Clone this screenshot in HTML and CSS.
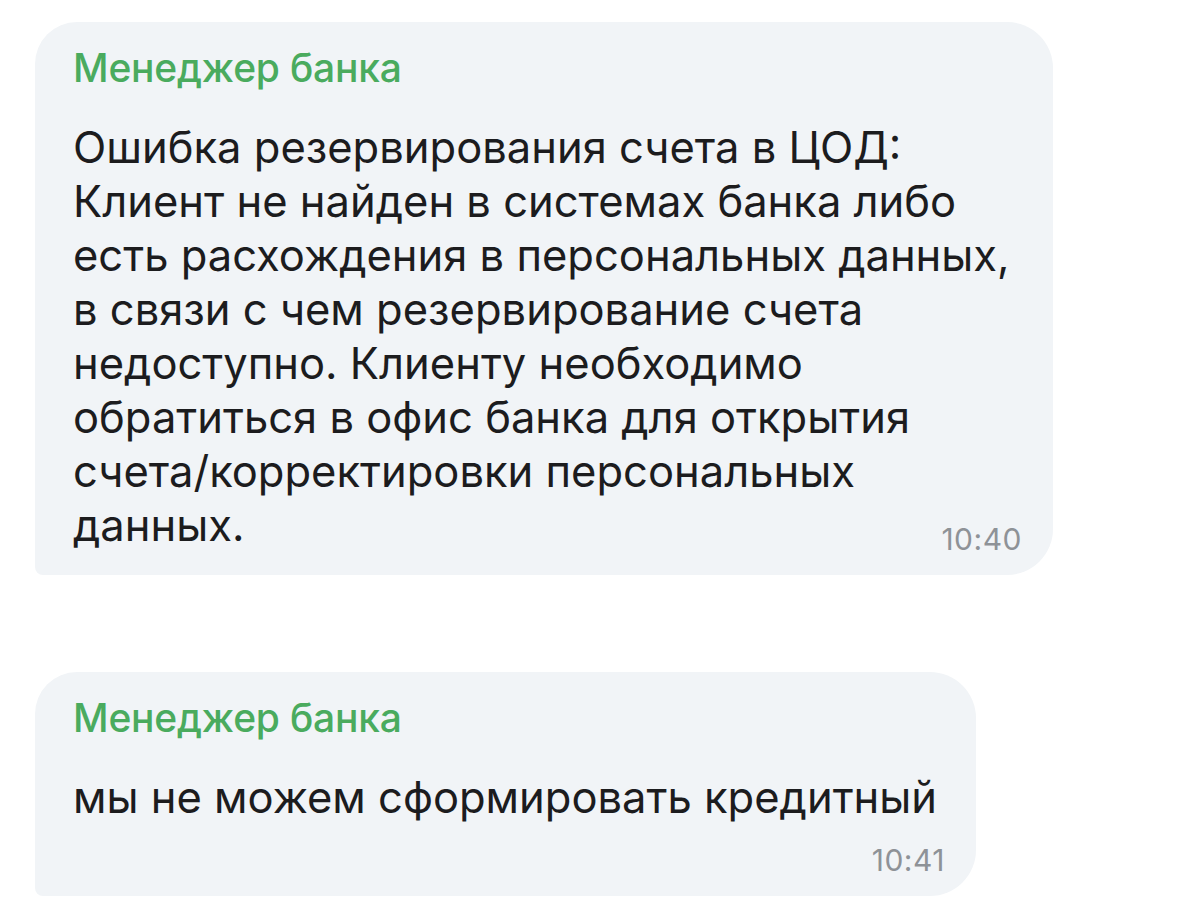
FILE: index.html
```html
<!DOCTYPE html>
<html lang="ru">
<head>
<meta charset="utf-8">
<link rel="stylesheet" href="styles.css">
</head>
<body>
<div class="chat">
  <div class="bubble bubble-wide">
    <div class="author">Менеджер банка</div>
    <div class="text">Ошибка резервирования счета в ЦОД:<br>Клиент не найден в системах банка либо<br>есть расхождения в персональных данных,<br>в связи с чем резервирование счета<br>недоступно. Клиенту необходимо<br>обратиться в офис банка для открытия<br>счета/корректировки персональных<br>данных.</div>
    <div class="time time-inline">10:40</div>
  </div>
  <div class="bubble bubble-narrow">
    <div class="author">Менеджер банка</div>
    <div class="text">мы не можем сформировать кредитный</div>
    <div class="time">10:41</div>
  </div>
</div>
</body>
</html>
```
FILE: styles.css
```css
html, body {
  margin: 0;
  padding: 0;
  background: #ffffff;
}
body {
  font-family: Inter, "Noto Sans", "DejaVu Sans", sans-serif;
  color: #1c1c1e;
}
.chat {
  padding: 22px 0 0 35px;
  display: flex;
  flex-direction: column;
  align-items: flex-start;
  gap: 97px;
}
.bubble {
  background: #f1f4f7;
  border-radius: 42px 46px 46px 8px;
  padding: 23px 31px 21px 38px;
  box-sizing: border-box;
  display: flex;
  flex-direction: column;
}
.bubble-wide {
  width: 1018px;
}
.bubble-narrow {
  width: 941px;
}
.author {
  color: #4aab5e;
  font-size: 39px;
  line-height: 46px;
  font-weight: 500;
  letter-spacing: -0.2px;
}
.text {
  font-size: 43.5px;
  line-height: 54px;
  margin-top: 29px;
  white-space: nowrap;
}
.time {
  align-self: flex-end;
  color: #8e9297;
  font-size: 30px;
  line-height: 30px;
  margin-top: 21px;
  letter-spacing: 0.5px;
}
.time-inline {
  margin-top: -28px;
}
```
